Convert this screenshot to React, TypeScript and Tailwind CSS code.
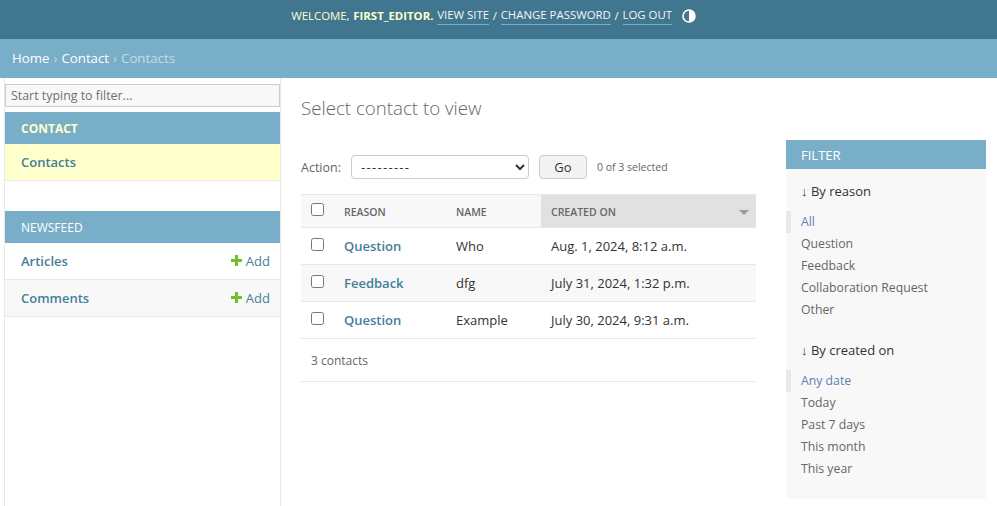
const font = { fontFamily: '"Open Sans", "Noto Sans", sans-serif' };

function ThemeIcon() {
  return (
    <svg viewBox="0 0 14 14" className="ml-[6px] h-[14px] w-[14px]">
      <circle cx="7" cy="7" r="6" fill="#417690" stroke="#fff" strokeWidth="1.6" />
      <path d="M7 1a6 6 0 0 1 0 12z" fill="#fff" />
    </svg>
  );
}

function HeaderLink({ children }: { children: string }) {
  return <a className="border-b border-[#79aec8] pb-px text-[#f5f5f5]">{children}</a>;
}

function NavRow({ label, alt }: { label: string; alt?: boolean }) {
  return (
    <div className={`flex h-[37px] items-center justify-between border-b border-[#e8e8e8] pl-4 pr-[10px] pt-[2px] text-[13px] ${alt ? "bg-[#f8f8f8]" : "bg-white"}`}>
      <a className="font-semibold text-[#447e9b]">{label}</a>
      <a className="flex items-center gap-[4px] text-[#447e9b]">
        <svg viewBox="0 0 11 11" className="mb-[3px] h-[11px] w-[11px]">
          <path d="M4 0h3v4h4v3H7v4H4V7H0V4h4z" fill="#70bf2b" />
        </svg>
        Add
      </a>
    </div>
  );
}

const rows = [
  { reason: "Question", name: "Who", created: "Aug. 1, 2024, 8:12 a.m." },
  { reason: "Feedback", name: "dfg", created: "July 31, 2024, 1:32 p.m." },
  { reason: "Question", name: "Example", created: "July 30, 2024, 9:31 a.m." },
];

function FilterGroup({ title, items }: { title: string; items: string[] }) {
  return (
    <div>
      <h3 className="pl-[15px] text-[13px] leading-[22px] text-[#333]">↓ By {title}</h3>
      <ul className="mt-[9px]">
        {items.map((item, i) => (
          <li
            key={item}
            className={`h-[22px] text-[12.25px] leading-[22px] ${i === 0 ? "border-l-[5px] border-[#e8e8e8] pl-[10px] text-[#5b80b2]" : "pl-[15px] text-[#666]"}`}
          >
            {item}
          </li>
        ))}
      </ul>
    </div>
  );
}

export default function App() {
  return (
    <div style={font} className="h-[506px] w-[997px] overflow-hidden bg-white text-[13px] text-[#333]">
      <header className="flex h-[39px] items-start justify-center bg-[#417690] pr-[10px] pt-[7px] text-[11.4px] uppercase leading-[16px] text-[#ffc]">
        <span className="flex items-center gap-[3.75px] whitespace-nowrap">
          <span>Welcome,</span>
          <strong className="font-bold">first_editor.</strong>
          <HeaderLink>View site</HeaderLink>
          <span>/</span>
          <HeaderLink>Change password</HeaderLink>
          <span>/</span>
          <HeaderLink>Log out</HeaderLink>
          <ThemeIcon />
        </span>
      </header>
      <nav className="flex h-[39px] items-center gap-[4px] bg-[#79aec8] px-[12px] text-[13.25px] text-[#c4dce8]">
        <a className="text-white">Home</a>›<a className="text-white">Contact</a>›<span>Contacts</span>
      </nav>
      <div className="flex h-[428px]">
        <aside className="ml-[4px] w-[277px] shrink-0 border-x border-[#e8e8e8] bg-white">
          <div className="pt-[6px]">
            <input
              placeholder="Start typing to filter..."
              className="block h-[23px] w-full border border-[#cccccc] bg-[#f8f8f8] px-[5px] text-[12.4px] text-[#333] placeholder:text-[#6f6f6f]"
            />
          </div>
          <section className="mt-[5px]">
            <h2 className="flex h-[32px] items-center bg-[#79aec8] pl-4 pt-[2px] text-[12px] font-bold uppercase text-[#ffc]">Contact</h2>
            <div className="flex h-[37px] items-center border-b border-[#e8e8e8] bg-[#ffc] pl-4 pt-[2px] text-[13px] font-semibold text-[#447e9b]">Contacts</div>
          </section>
          <section className="mt-[30px]">
            <h2 className="flex h-[32px] items-center bg-[#79aec8] pl-4 pt-[2px] text-[12px] uppercase text-white">Newsfeed</h2>
            <NavRow label="Articles" />
            <NavRow label="Comments" alt />
          </section>
        </aside>
        <main className="flex min-w-0 flex-1 px-[20px]">
          <div className="w-[455px] shrink-0">
            <h1 className="mt-[17px] text-[18.7px] font-light leading-[26px] text-[#666]">Select contact to view</h1>
            <div className="mt-[34px] flex h-[24px] items-center text-[12.5px] text-[#666]">
              <label className="pt-[2px]">Action:</label>
              <select className="ml-[10px] h-[24px] w-[178px] rounded-[4px] border border-[#cccccc] bg-white pl-[5px] text-[13px] tracking-[1.3px] text-[#333]">
                <option>---------</option>
              </select>
              <button className="ml-[10px] h-[24px] w-[48px] rounded-[4px] border border-[#cccccc] bg-[#f3f3f3] pt-[2px] text-[13px] text-[#333]">Go</button>
              <span className="ml-[10px] pt-[1px] text-[10.5px] text-[#666]">0 of 3 selected</span>
            </div>
            <table className="mt-[15px] w-[455px] table-fixed border-collapse text-[13px]">
              <thead>
                <tr className="h-[33px] border-y border-[#e8e8e8] bg-[#f8f8f8] text-left text-[10.5px] font-semibold uppercase text-[#666]">
                  <th className="w-[33px] pl-[10px] align-middle font-normal">
                    <input type="checkbox" className="mb-[3px] block h-[13px] w-[13px]" />
                  </th>
                  <th className="w-[112px] pl-[10px] pt-[3px] font-semibold">Reason</th>
                  <th className="w-[95px] pl-[10px] pt-[3px] font-semibold">Name</th>
                  <th className="bg-[#e1e1e1] pl-[10px] pt-[3px] font-semibold">
                    <span className="flex items-center justify-between pr-[7px]">
                      Created on
                      <span className="h-0 w-0 border-x-[5px] border-t-[5px] border-x-transparent border-t-[#999]" />
                    </span>
                  </th>
                </tr>
              </thead>
              <tbody>
                {rows.map((row, i) => (
                  <tr key={i} className={`h-[37px] border-b border-[#e8e8e8] ${i === 1 ? "bg-[#f8f8f8]" : "bg-white"}`}>
                    <td className="pl-[10px]">
                      <input type="checkbox" className="mb-[3px] block h-[13px] w-[13px]" />
                    </td>
                    <td className="pl-[10px] pt-[2px] font-semibold text-[#447e9b]">{row.reason}</td>
                    <td className="pl-[10px] pt-[2px]">{row.name}</td>
                    <td className="pl-[10px] pt-[2px]">{row.created}</td>
                  </tr>
                ))}
              </tbody>
            </table>
            <p className="h-[43px] border-b border-[#e8e8e8] pl-[10px] text-[12px] leading-[44px] text-[#666]">3 contacts</p>
          </div>
          <div className="ml-[30px] mt-[62px] h-[359px] w-[200px] shrink-0 bg-[#f8f8f8]">
            <h2 className="flex h-[29px] items-center bg-[#79aec8] pl-[15px] pt-[2px] text-[13px] uppercase text-white">Filter</h2>
            <div className="pt-[11px]">
              <FilterGroup title="reason" items={["All", "Question", "Feedback", "Collaboration Request", "Other"]} />
              <div className="mt-[18px]">
                <FilterGroup title="created on" items={["Any date", "Today", "Past 7 days", "This month", "This year"]} />
              </div>
            </div>
          </div>
        </main>
      </div>
    </div>
  );
}
